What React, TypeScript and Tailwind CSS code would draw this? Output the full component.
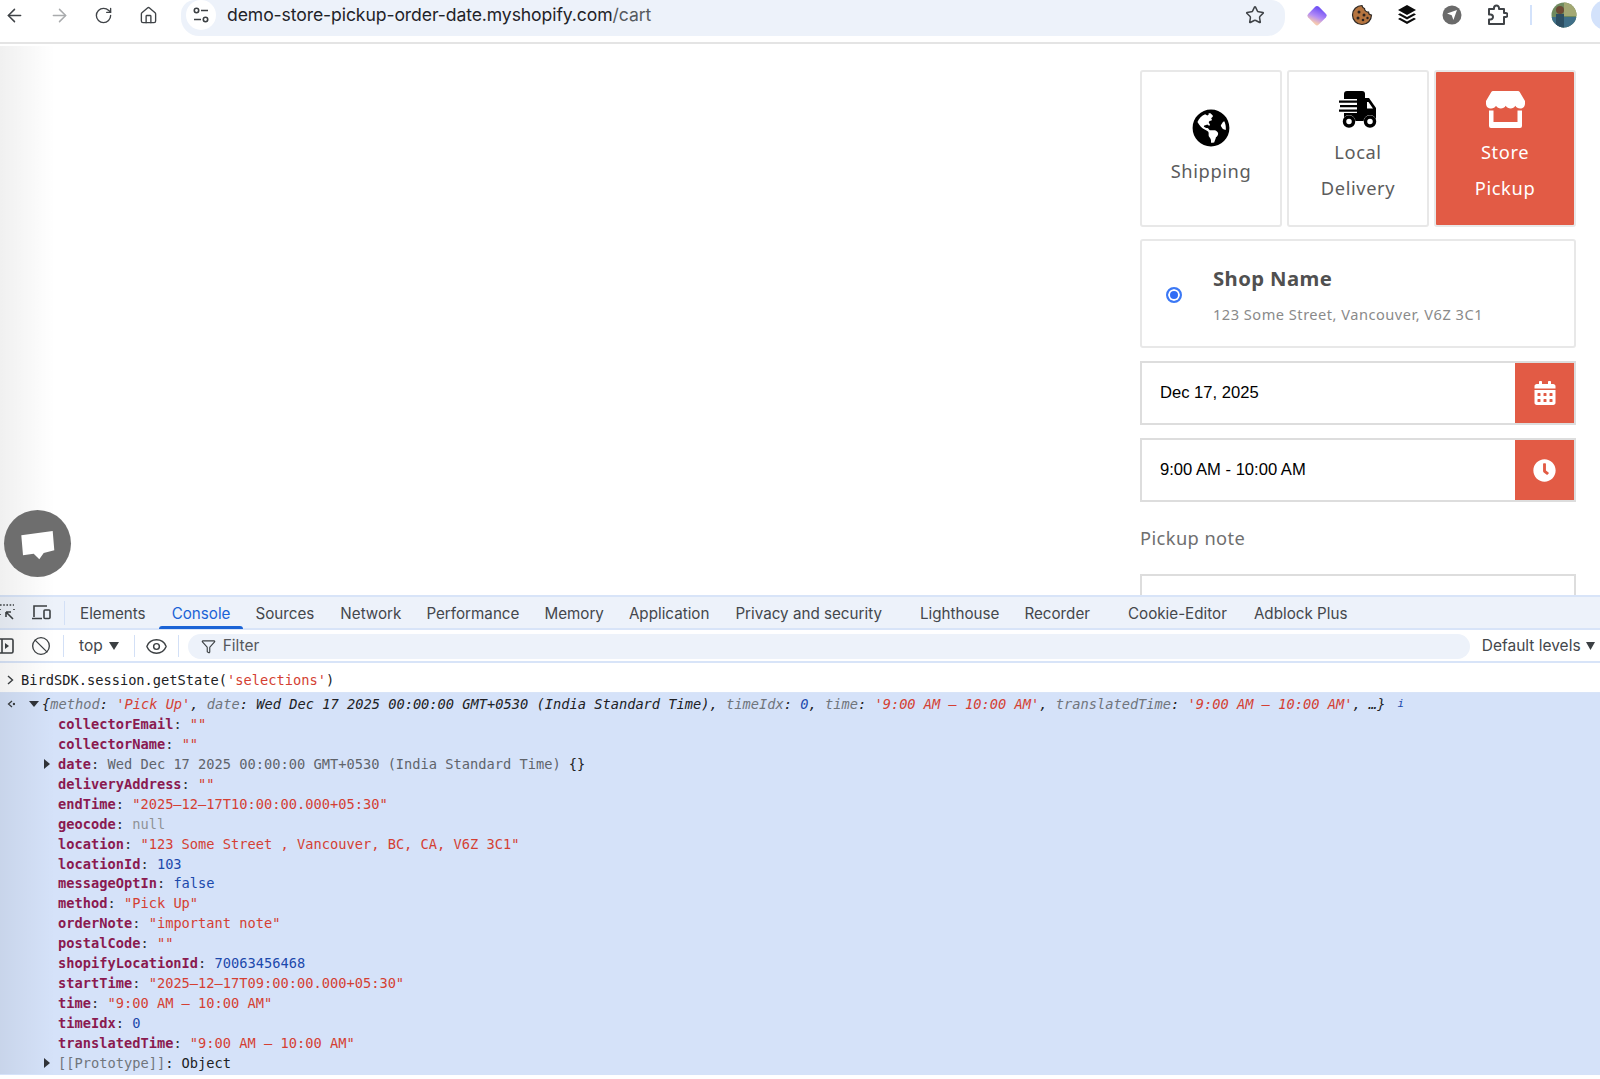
import React from 'react';
import { ArrowLeft, ArrowRight, RotateCw, House, Star, Ban, Eye, Funnel } from 'lucide-react';
import { FaGlobeAmericas, FaCalendarAlt, FaClock } from 'react-icons/fa';

type Row = { name: string; value: string; color: string; arrow?: boolean; extra?: string };

const rows: Row[] = [
  { name: 'collectorEmail', value: '""', color: 'text-[#d43f33]' },
  { name: 'collectorName', value: '""', color: 'text-[#d43f33]' },
  { name: 'date', value: 'Wed Dec 17 2025 00:00:00 GMT+0530 (India Standard Time)', color: 'text-[#60646b]', arrow: true, extra: '{}' },
  { name: 'deliveryAddress', value: '""', color: 'text-[#d43f33]' },
  { name: 'endTime', value: '"2025–12–17T10:00:00.000+05:30"', color: 'text-[#d43f33]' },
  { name: 'geocode', value: 'null', color: 'text-[#8f9296]' },
  { name: 'location', value: '"123 Some Street , Vancouver, BC, CA, V6Z 3C1"', color: 'text-[#d43f33]' },
  { name: 'locationId', value: '103', color: 'text-[#1c49ac]' },
  { name: 'messageOptIn', value: 'false', color: 'text-[#1c49ac]' },
  { name: 'method', value: '"Pick Up"', color: 'text-[#d43f33]' },
  { name: 'orderNote', value: '"important note"', color: 'text-[#d43f33]' },
  { name: 'postalCode', value: '""', color: 'text-[#d43f33]' },
  { name: 'shopifyLocationId', value: '70063456468', color: 'text-[#1c49ac]' },
  { name: 'startTime', value: '"2025–12–17T09:00:00.000+05:30"', color: 'text-[#d43f33]' },
  { name: 'time', value: '"9:00 AM – 10:00 AM"', color: 'text-[#d43f33]' },
  { name: 'timeIdx', value: '0', color: 'text-[#1c49ac]' },
  { name: 'translatedTime', value: '"9:00 AM – 10:00 AM"', color: 'text-[#d43f33]' },
];

const Caret = ({ open }: { open?: boolean }) => (
  <svg width="10" height="10" viewBox="0 0 10 10" className="shrink-0 text-[#303338]">
    {open ? <path d="M0 2h10L5 8z" fill="currentColor" /> : <path d="M2 0v10l6-5z" fill="currentColor" />}
  </svg>
);

const TruckIcon = () => (
  <svg width="38" height="37" viewBox="0 0 38 37">
    <rect x="5" y="0" width="21" height="30" rx="3" fill="#000" />
    <path d="M5 8h13v14H5z" fill="#fff" />
    <path d="M0 9.500h18v2.200H0zM1 14h17v2.200H1zM0 18.500h18v2.200H0z" fill="#000" />
    <path d="M18 8h8v22H5v-8h13z" fill="#000" />
    <path d="M26 7h4l7 10v11a2 2 0 0 1-2 2H26z" fill="#000" />
    <path d="M28 11h1.500l4.500 6.500h-6z" fill="#fff" />
    <circle cx="10" cy="30.500" r="6.500" fill="#fff" />
    <circle cx="10" cy="30.500" r="4.500" fill="none" stroke="#000" strokeWidth="3.500" />
    <circle cx="31" cy="30.500" r="6.500" fill="#fff" />
    <circle cx="31" cy="30.500" r="4.500" fill="none" stroke="#000" strokeWidth="3.500" />
  </svg>
);

const StoreIcon = () => (
  <svg width="39" height="37" viewBox="0 0 39 37" fill="#fff">
    <path d="M7 0h25a2 2 0 0 1 1.700 1L39 10v2.500c0 3-2 5-4.800 5-2.200 0-3.800-1-4.900-2.700-1 1.700-2.600 2.700-4.700 2.700-2 0-3.800-1-4.900-2.700-1 1.700-2.800 2.700-4.900 2.700-2 0-3.700-1-4.800-2.700-1 1.700-2.600 2.700-4.700 2.700C2 17.500 0 15.500 0 12.500V10l5.300-9A2 2 0 0 1 7 0z" />
    <path d="M3 19.500h4.500V31h24V19.500H36V35a2 2 0 0 1-2 2H5a2 2 0 0 1-2-2z" />
  </svg>
);

const BrowserBar = () => (
  <div className="h-[44px] shrink-0 flex items-start border-b-2 border-[#e4e4e4] bg-white">
    <div className="h-[30px] shrink-0 flex items-center text-[#3f4347]">
      <ArrowLeft size={21} strokeWidth={1.7} className="ml-[4px]" />
      <ArrowRight size={21} strokeWidth={1.7} className="ml-[24px] text-[#a9abad]" />
      <RotateCw size={19} strokeWidth={1.7} className="ml-[24px]" />
      <House size={19} strokeWidth={1.7} className="ml-[26px]" />
    </div>
    <div className="ml-[23px] w-[1104px] shrink-0 h-[36px] rounded-b-[18px] rounded-t-[14px] bg-[#edf2fa] flex items-start pl-[5px]">
      <div className="w-[30px] h-[30px] rounded-full bg-white flex items-center justify-center">
        <svg width="18" height="18" viewBox="0 0 18 18" fill="none" stroke="#3c4043" strokeWidth="1.6">
          <circle cx="4.500" cy="4.500" r="2.200" />
          <path d="M9 4.500h7M2 13.500h7" />
          <circle cx="13.500" cy="13.500" r="2.200" />
        </svg>
      </div>
      <div className="ml-[11px] h-[30px] flex items-center font-['Inter'] text-[17.6px] tracking-[-0.1px] whitespace-nowrap text-[#1f2328]">
        demo-store-pickup-order-date.myshopify.com<span className="text-[#565a5f]">/cart</span>
      </div>
      <Star size={20} strokeWidth={1.8} className="ml-auto mr-[20px] mt-[5px] text-[#3f4347]" />
    </div>
    <div className="h-[30px] shrink-0 flex items-center">
      <svg width="24" height="24" viewBox="0 0 24 24" className="ml-[20px]">
        <defs>
          <linearGradient id="gem" x1="0.2" y1="0" x2="0.6" y2="1">
            <stop offset="0" stopColor="#6a4cf5" />
            <stop offset="0.6" stopColor="#b48cf5" />
            <stop offset="1" stopColor="#f5c9b0" />
          </linearGradient>
        </defs>
        <path d="M13 2.500l9 9.500-9 9.500 6-9.500z" fill="#c8b8fa" />
        <rect x="5" y="5" width="15" height="15" rx="2.500" transform="rotate(45 12 12)" fill="url(#gem)" />
      </svg>
      <svg width="22" height="22" viewBox="0 0 22 22" className="ml-[22px]">
        <path d="M11 1.500a9.500 9.500 0 1 0 9.500 9.500 3 3 0 0 1-3-3 3.500 3.500 0 0 1-4-3.500A3.500 3.500 0 0 1 11 1.500z" fill="#b5743f" stroke="#2f2a26" strokeWidth="1.2" />
        <circle cx="8" cy="8" r="1.500" fill="#2b2320" />
        <circle cx="13" cy="11" r="1.500" fill="#2b2320" />
        <circle cx="7" cy="14" r="1.500" fill="#2b2320" />
        <circle cx="12" cy="16" r="1.300" fill="#2b2320" />
        <circle cx="16.500" cy="14" r="1.200" fill="#2b2320" />
      </svg>
      <svg width="20" height="22" viewBox="0 0 20 22" className="ml-[24px]">
        <path d="M10 1l9 5-9 5-9-5z" fill="#0b0b0b" />
        <path d="M3 9.200l7 3.900 7-3.900 2 1.300-9 5-9-5z" fill="#0b0b0b" />
        <path d="M3 13.700l7 3.900 7-3.900 2 1.300-9 5-9-5z" fill="#0b0b0b" />
      </svg>
      <svg width="20" height="20" viewBox="0 0 20 20" className="ml-[25px]">
        <circle cx="10" cy="10" r="9.500" fill="#6a6a6a" />
        <path d="M15 5l-3.600 10-1.700-4.700L5 8.600z" fill="#fff" />
      </svg>
      <svg width="22" height="22" viewBox="0 0 22 22" className="ml-[24px]" fill="none" stroke="#3f4347" strokeWidth="2" strokeLinejoin="round">
        <path d="M3 5h5V4a2.500 2.500 0 0 1 5 0v1h5v4h1.500a2 2 0 0 1 0 4H18v7H3v-4.500h1.500a2.500 2.500 0 0 0 0-5H3z" />
      </svg>
      <div className="ml-[22px] w-[2px] h-[20px] bg-[#d3e2fb]" />
      <svg width="26" height="26" viewBox="0 0 26 26" className="ml-[19px]">
        <clipPath id="ava"><circle cx="13" cy="13" r="12.500" /></clipPath>
        <g clipPath="url(#ava)">
          <rect width="26" height="26" fill="#6f8a5e" />
          <rect x="13" width="13" height="14" fill="#a3a873" />
          <rect x="0" y="15" width="26" height="11" fill="#3f6f88" />
          <circle cx="9" cy="8" r="4" fill="#6d4a35" />
          <rect x="5" y="12" width="8" height="14" fill="#2d4f63" />
        </g>
      </svg>
      <div className="ml-[14px] w-[30px] h-[30px] rounded-full bg-[#d3e2fb] shrink-0" />
    </div>
  </div>
);

const MethodCard = ({
  icon,
  lines,
  active,
}: {
  icon: React.ReactNode;
  lines: string[];
  active?: boolean;
}) => (
  <div
    className={`h-[157px] border-2 rounded-[3px] flex flex-col items-center justify-center font-['Noto_Sans'] text-[18.3px] leading-[36px] tracking-[0.6px] ${
      active ? 'bg-[#e25b45] border-[#e8e8e8] text-white' : 'bg-white border-[#e8e8e8] text-[#5c5c5c]'
    }`}
  >
    <div className="mb-[6px]">{icon}</div>
    {lines.map((line) => (
      <div key={line}>{line}</div>
    ))}
  </div>
);

const PickerRow = ({ label, icon }: { label: string; icon: React.ReactNode }) => (
  <div className="h-[64px] shrink-0 border-2 border-[#dddddd] flex items-stretch">
    <div className="flex-1 flex items-center pl-[18px] font-['Liberation_Sans'] text-[16.6px] text-black">{label}</div>
    <div className="w-[59px] bg-[#e25b45] flex items-center justify-center text-white">{icon}</div>
  </div>
);

const StorePage = () => (
  <div className="h-[551px] shrink-0 overflow-hidden flex justify-end pr-[24px] pt-[26px] bg-white">
    <div className="w-[436px] flex flex-col">
      <div className="grid grid-cols-3 gap-[5px] shrink-0">
        <MethodCard icon={<FaGlobeAmericas size={38} className="text-black" />} lines={['Shipping']} />
        <MethodCard icon={<TruckIcon />} lines={['Local', 'Delivery']} />
        <MethodCard icon={<StoreIcon />} lines={['Store', 'Pickup']} active />
      </div>
      <div className="mt-[12px] h-[109px] shrink-0 border-2 border-[#e8e8e8] rounded-[3px] flex items-center">
        <div className="ml-[24px] mt-[3px] w-[16px] h-[16px] shrink-0 rounded-full border-2 border-[#3b78f5] bg-[#2f6cf5] shadow-[inset_0_0_0_2px_white]" />
        <div className="ml-[31px] font-['Noto_Sans']">
          <div className="text-[20.3px] font-bold leading-[30px] text-[#505050] tracking-[0.4px]">Shop Name</div>
          <div className="mt-[11px] text-[14.6px] leading-[20px] text-[#8a8a8a] tracking-[0.5px] whitespace-nowrap">
            123 Some Street, Vancouver, V6Z 3C1
          </div>
        </div>
      </div>
      <div className="mt-[13px] flex flex-col gap-[13px] shrink-0">
        <PickerRow label="Dec 17, 2025" icon={<FaCalendarAlt size={24} />} />
        <PickerRow label="9:00 AM - 10:00 AM" icon={<FaClock size={23} />} />
      </div>
      <div className="mt-[22px] shrink-0 font-['Noto_Sans'] text-[18.3px] leading-[28px] text-[#6f6f6f] tracking-[0.4px]">Pickup note</div>
      <div className="mt-[22px] h-[60px] border-2 border-[#dddddd] shrink-0" />
    </div>
  </div>
);

const tabs = [
  { label: 'Elements', cls: 'ml-[80px]' },
  { label: 'Console', cls: 'ml-[26px]', active: true },
  { label: 'Sources', cls: 'ml-[25px]' },
  { label: 'Network', cls: 'ml-[26px]' },
  { label: 'Performance', cls: 'ml-[25px]' },
  { label: 'Memory', cls: 'ml-[25px]' },
  { label: 'Application', cls: 'ml-[25px]' },
  { label: 'Privacy and security', cls: 'ml-[26px]' },
  { label: 'Lighthouse', cls: 'ml-[38px]' },
  { label: 'Recorder', cls: 'ml-[25px]' },
  { label: 'Cookie-Editor', cls: 'ml-[38px]' },
  { label: 'Adblock Plus', cls: 'ml-[27px]' },
];

const DevTools = () => (
  <div className="flex-1 flex flex-col min-h-0 bg-white font-['Inter'] text-[#44474c]">
    <div className="relative h-[35px] pt-[2px] shrink-0 flex items-center bg-[#edf2fa] border-t-2 border-b-2 border-[#d8e4f8] text-[15.2px] leading-[20px] whitespace-nowrap">
      <svg width="20" height="20" viewBox="0 0 20 20" className="absolute left-[-2px] top-[6px]" fill="none" stroke="#3c4043" strokeWidth="1.6">
        <path d="M2 2h14M2 6v1M2 11v1M16 6v1" strokeDasharray="1.6 1.6" />
        <path d="M8 9l7 7M8 9v5M8 9h5" />
      </svg>
      <svg width="22" height="20" viewBox="0 0 22 20" className="absolute left-[31px] top-[6px]" fill="none" stroke="#3c4043" strokeWidth="1.6">
        <path d="M3 14V3h13M1 15.500h10" />
        <rect x="13" y="7" width="6" height="8.500" rx="1" />
      </svg>
      <div className="absolute left-[64px] top-[4px] w-[1px] h-[24px] bg-[#d3e0f6]" />
      {tabs.map((tab) => (
        <div
          key={tab.label}
          className={`${tab.cls} ${tab.active ? 'text-[#1a63d6]' : 'text-[#44474c]'} relative`}
        >
          {tab.label}
          {tab.active && (
            <div className="absolute left-[-13px] right-[-13px] top-[22px] h-[3px] rounded-t-[3px] bg-[#1a63d6]" />
          )}
        </div>
      ))}
    </div>
    <div className="h-[33px] pt-[1px] shrink-0 flex items-center border-b-2 border-[#d8e4f8] text-[15.5px] whitespace-nowrap">
      <svg width="18" height="18" viewBox="0 0 18 18" className="ml-[-4px] shrink-0" fill="none" stroke="#3c4043" strokeWidth="1.6">
        <rect x="1" y="2" width="16" height="14" rx="1.5" />
        <path d="M6 2v14" />
        <path d="M9 6v6l4-3z" fill="#3c4043" stroke="none" />
      </svg>
      <Ban size={20} strokeWidth={1.6} className="ml-[17px] shrink-0 text-[#3c4043]" />
      <div className="ml-[12px] w-[1px] h-[22px] bg-[#d3e0f6]" />
      <span className="ml-[15px]">top</span>
      <svg width="10" height="8" viewBox="0 0 10 8" className="ml-[6px] shrink-0"><path d="M0 0h10L5 8z" fill="#3c4043" /></svg>
      <div className="ml-[15px] w-[1px] h-[22px] bg-[#d3e0f6]" />
      <Eye size={23} strokeWidth={1.5} className="ml-[10px] shrink-0 text-[#3c4043]" />
      <div className="ml-[10px] w-[1px] h-[22px] bg-[#d3e0f6]" />
      <div className="ml-[9px] w-[1282px] shrink-0 h-[25px] rounded-[13px] bg-[#edf2fa] flex items-center pl-[13px] text-[#55585d]">
        <Funnel size={15} strokeWidth={1.8} className="text-[#3c4043]" />
        <span className="ml-[7px]">Filter</span>
      </div>
      <span className="ml-[12px]">Default levels</span>
      <svg width="9" height="8" viewBox="0 0 9 8" className="ml-[5px] shrink-0"><path d="M0 0h9L4.500 8z" fill="#3c4043" /></svg>
    </div>
    <div className="font-['DejaVu_Sans_Mono'] text-[13.7px] leading-[20px] whitespace-nowrap">
      <div className="h-[30px] flex items-center pl-[6px] pt-[4px] text-[#202124] border-b border-[#d8e4f8]">
        <svg width="9" height="10" viewBox="0 0 9 10" fill="none" stroke="#3c4043" strokeWidth="1.4"><path d="M2 1l4.500 4L2 9" /></svg>
        <span className="ml-[6px]">
          BirdSDK.session.getState(<span className="text-[#d43f33]">'selections'</span>)
        </span>
      </div>
      <div className="h-[382px] bg-[#d5e2f9] pt-[1px]">
        <div className="h-[20px] flex items-center pl-[6px] italic text-[#202124]">
          <svg width="9" height="10" viewBox="0 0 9 10" fill="none" stroke="#3c4043" strokeWidth="1.3"><path d="M6 2L2.500 5 6 8" /><circle cx="8" cy="5" r="0.6" fill="#3c4043" /></svg>
          <span className="ml-[14px]"><Caret open /></span>
          <span className="ml-[3px]">
            {'{'}
            <span className="text-[#70757c]">method</span>: <span className="text-[#d43f33]">'Pick Up'</span>,{' '}
            <span className="text-[#70757c]">date</span>: Wed Dec 17 2025 00:00:00 GMT+0530 (India Standard Time),{' '}
            <span className="text-[#70757c]">timeIdx</span>: <span className="text-[#1c49ac]">0</span>,{' '}
            <span className="text-[#70757c]">time</span>: <span className="text-[#d43f33]">'9:00 AM – 10:00 AM'</span>,{' '}
            <span className="text-[#70757c]">translatedTime</span>: <span className="text-[#d43f33]">'9:00 AM – 10:00 AM'</span>, …{'}'}
          </span>
          <span className="ml-[12px] text-[#1c49ac] text-[11px]">i</span>
        </div>
        {rows.map((row) => (
          <div key={row.name} className="h-[19.95px] flex items-center">
            <div className="w-[58px] shrink-0 flex justify-end pr-[6px]">{row.arrow && <Caret />}</div>
            <span className="font-bold text-[#8a1a50]">{row.name}</span>
            <span className="text-[#303338]">:&nbsp;</span>
            <span className={row.color}>{row.value}</span>
            {row.extra && <span className="ml-[8px] text-[#202124]">{row.extra}</span>}
          </div>
        ))}
        <div className="h-[20px] flex items-center">
          <div className="w-[58px] shrink-0 flex justify-end pr-[6px]"><Caret /></div>
          <span className="text-[#70757c]">[[Prototype]]</span>
          <span className="text-[#202124]">: Object</span>
        </div>
      </div>
    </div>
  </div>
);

export default function App() {
  return (
    <div className="relative w-[1600px] h-[1079px] overflow-hidden flex flex-col bg-white">
      <BrowserBar />
      <StorePage />
      <DevTools />
      {/* edge shadow from the page screenshot */}
      <div className="absolute left-0 top-[46px] bottom-[5px] w-[55px] bg-gradient-to-r from-black/6 to-transparent pointer-events-none" />
      <div className="absolute left-[4px] top-[510px] w-[67px] h-[67px] rounded-full bg-[#6e6e6e] flex items-center justify-center">
        <svg width="34" height="29" viewBox="0 0 34 29" className="mt-[4px]">
          <path d="M0.300 4.300L31.700 0l1.600 19.300-10.600 2.700-4.400 6.300-5.600-5.600-10.700 1.600z" fill="#fff" />
        </svg>
      </div>
    </div>
  );
}
